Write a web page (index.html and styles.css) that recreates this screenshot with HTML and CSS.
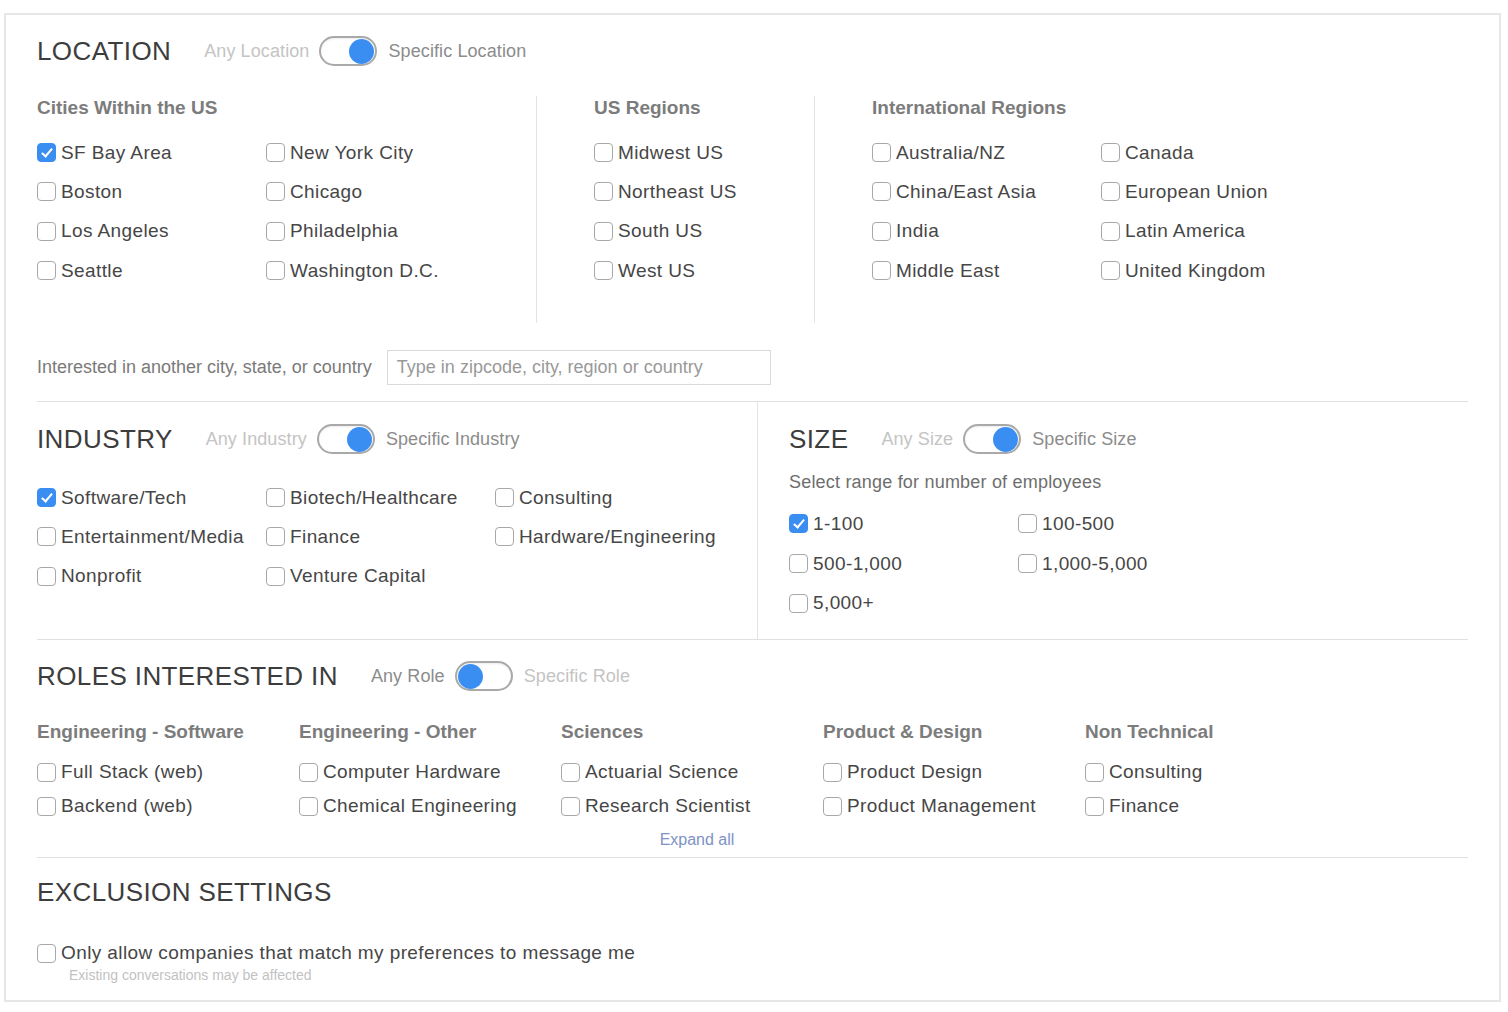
FILE: index.html
```html
<!DOCTYPE html>
<html>
<head>
<meta charset="utf-8">
<link rel="stylesheet" href="styles.css">
</head>
<body>
<div class="panel">
  <section class="location">
    <div class="head">
      <h2 class="title">LOCATION</h2>
      <span class="opt off">Any Location</span>
      <span class="toggle on"><span class="knob"></span></span>
      <span class="opt">Specific Location</span>
    </div>
    <div class="loc-cols">
      <div class="col cities">
        <h3 class="colhead">Cities Within the US</h3>
        <div class="grid2">
          <label class="item"><span class="cb checked"></span>SF Bay Area</label>
          <label class="item"><span class="cb"></span>New York City</label>
          <label class="item"><span class="cb"></span>Boston</label>
          <label class="item"><span class="cb"></span>Chicago</label>
          <label class="item"><span class="cb"></span>Los Angeles</label>
          <label class="item"><span class="cb"></span>Philadelphia</label>
          <label class="item"><span class="cb"></span>Seattle</label>
          <label class="item"><span class="cb"></span>Washington D.C.</label>
        </div>
      </div>
      <div class="col regions">
        <h3 class="colhead">US Regions</h3>
        <div class="grid1">
          <label class="item"><span class="cb"></span>Midwest US</label>
          <label class="item"><span class="cb"></span>Northeast US</label>
          <label class="item"><span class="cb"></span>South US</label>
          <label class="item"><span class="cb"></span>West US</label>
        </div>
      </div>
      <div class="col intl">
        <h3 class="colhead">International Regions</h3>
        <div class="grid2">
          <label class="item"><span class="cb"></span>Australia/NZ</label>
          <label class="item"><span class="cb"></span>Canada</label>
          <label class="item"><span class="cb"></span>China/East Asia</label>
          <label class="item"><span class="cb"></span>European Union</label>
          <label class="item"><span class="cb"></span>India</label>
          <label class="item"><span class="cb"></span>Latin America</label>
          <label class="item"><span class="cb"></span>Middle East</label>
          <label class="item"><span class="cb"></span>United Kingdom</label>
        </div>
      </div>
    </div>
    <div class="other">
      <span class="other-label">Interested in another city, state, or country</span>
      <span class="input">Type in zipcode, city, region or country</span>
    </div>
  </section>

  <section class="split">
    <div class="industry">
      <div class="head">
        <h2 class="title">INDUSTRY</h2>
        <span class="opt off">Any Industry</span>
        <span class="toggle on"><span class="knob"></span></span>
        <span class="opt">Specific Industry</span>
      </div>
      <div class="grid3">
        <label class="item"><span class="cb checked"></span>Software/Tech</label>
        <label class="item"><span class="cb"></span>Biotech/Healthcare</label>
        <label class="item"><span class="cb"></span>Consulting</label>
        <label class="item"><span class="cb"></span>Entertainment/Media</label>
        <label class="item"><span class="cb"></span>Finance</label>
        <label class="item"><span class="cb"></span>Hardware/Engineering</label>
        <label class="item"><span class="cb"></span>Nonprofit</label>
        <label class="item"><span class="cb"></span>Venture Capital</label>
      </div>
    </div>
    <div class="size">
      <div class="head">
        <h2 class="title">SIZE</h2>
        <span class="opt off">Any Size</span>
        <span class="toggle on"><span class="knob"></span></span>
        <span class="opt">Specific Size</span>
      </div>
      <p class="hint">Select range for number of employees</p>
      <div class="grid2">
        <label class="item"><span class="cb checked"></span>1-100</label>
        <label class="item"><span class="cb"></span>100-500</label>
        <label class="item"><span class="cb"></span>500-1,000</label>
        <label class="item"><span class="cb"></span>1,000-5,000</label>
        <label class="item"><span class="cb"></span>5,000+</label>
      </div>
    </div>
  </section>

  <section class="roles">
    <div class="head">
      <h2 class="title">ROLES INTERESTED IN</h2>
      <span class="opt">Any Role</span>
      <span class="toggle"><span class="knob"></span></span>
      <span class="opt off">Specific Role</span>
    </div>
    <div class="grid5">
      <div class="rcol">
        <h3 class="colhead">Engineering - Software</h3>
        <label class="item"><span class="cb"></span>Full Stack (web)</label>
        <label class="item"><span class="cb"></span>Backend (web)</label>
      </div>
      <div class="rcol">
        <h3 class="colhead">Engineering - Other</h3>
        <label class="item"><span class="cb"></span>Computer Hardware</label>
        <label class="item"><span class="cb"></span>Chemical Engineering</label>
      </div>
      <div class="rcol">
        <h3 class="colhead">Sciences</h3>
        <label class="item"><span class="cb"></span>Actuarial Science</label>
        <label class="item"><span class="cb"></span>Research Scientist</label>
      </div>
      <div class="rcol">
        <h3 class="colhead">Product &amp; Design</h3>
        <label class="item"><span class="cb"></span>Product Design</label>
        <label class="item"><span class="cb"></span>Product Management</label>
      </div>
      <div class="rcol">
        <h3 class="colhead">Non Technical</h3>
        <label class="item"><span class="cb"></span>Consulting</label>
        <label class="item"><span class="cb"></span>Finance</label>
      </div>
    </div>
    <div class="expand"><a class="expand-link">Expand all</a></div>
  </section>

  <section class="exclusion">
    <h2 class="title">EXCLUSION SETTINGS</h2>
    <label class="item excl"><span class="cb"></span>Only allow companies that match my preferences to message me</label>
    <p class="note">Existing conversations may be affected</p>
  </section>
</div>
</body>
</html>
```

FILE: styles.css
```css
* { box-sizing: border-box; }
html, body { margin: 0; padding: 0; background: #fff; }
body {
  font-family: "Liberation Sans", Arial, sans-serif;
  color: #454545;
  padding: 13px 0 0 4px;
}
.panel {
  width: 1497px;
  height: 989px;
  border: 2px solid #e6e6e6;
  padding: 0 31px 0 31px;
}
h2, h3, p { margin: 0; font-weight: normal; }

.head {
  display: flex;
  align-items: center;
  height: 30px;
}
.title {
  font-size: 26px;
  color: #3d3d3d;
  line-height: 30px;
  margin-right: 33px;
  letter-spacing: 0.4px;
}
.opt {
  font-size: 18px;
  color: #8c8c8c;
  letter-spacing: 0.1px;
}
.opt.off { color: #c4c4c4; }
.toggle {
  width: 58px;
  height: 30px;
  border: 2px solid #a9a9a9;
  border-radius: 15px;
  margin: 0 11px 0 10px;
  display: flex;
  align-items: center;
  padding: 0 1px;
  box-shadow: inset 0 1px 2px rgba(0,0,0,0.08);
}
.toggle.on { justify-content: flex-end; }
.knob {
  width: 25px;
  height: 25px;
  border-radius: 50%;
  background: #3a8ef2;
}

.colhead {
  font-size: 19px;
  font-weight: bold;
  color: #7c7c7c;
  line-height: 24px;
}

.item {
  display: flex;
  align-items: center;
  font-size: 19px;
  color: #464646;
  height: 39.3px;
  white-space: nowrap;
  letter-spacing: 0.4px;
}
.cb {
  width: 19px;
  height: 19px;
  border: 1px solid #a8a8a8;
  border-radius: 4px;
  margin-right: 5px;
  flex: none;
  position: relative;
  background: #fff;
}
.cb.checked {
  background: #3a8ef2;
  border-color: #3a8ef2;
}
.cb.checked::after {
  content: "";
  position: absolute;
  left: 5.5px;
  top: 2px;
  width: 4px;
  height: 9px;
  border: solid #fff;
  border-width: 0 2px 2px 0;
  transform: rotate(40deg);
}

/* location */
.location { padding-top: 21px; }
.loc-cols {
  display: flex;
  margin-top: 30px;
  height: 227px;
}
.col .colhead { margin-bottom: 13px; }
.cities { width: 500px; border-right: 1px solid #e3e3e3; }
.regions { width: 278px; padding-left: 57px; border-right: 1px solid #e3e3e3; }
.intl { padding-left: 57px; }
.grid2 { display: grid; grid-template-columns: 229px 229px; }
.grid1 { display: grid; grid-template-columns: 229px; }
.grid3 { display: grid; grid-template-columns: 229px 229px 229px; }

.other {
  display: flex;
  align-items: center;
  margin-top: 27px;
  padding-bottom: 16px;
  border-bottom: 1px solid #e0e0e0;
}
.other-label { font-size: 18px; color: #7a7a7a; margin-right: 15px; }
.input {
  width: 384px;
  height: 35px;
  border: 1px solid #dadada;
  padding: 0 9px;
  display: flex;
  align-items: center;
  font-size: 18px;
  color: #999;
}

/* industry / size */
.split {
  display: flex;
  height: 238px;
  border-bottom: 1px solid #e0e0e0;
}
.industry {
  width: 721px;
  border-right: 1px solid #e3e3e3;
  padding-top: 22px;
}
.industry .grid3 { margin-top: 24px; }
.size { padding-left: 31px; padding-top: 22px; }
.hint {
  font-size: 18px;
  color: #6e6e6e;
  line-height: 24px;
  margin-top: 16px;
  letter-spacing: 0.2px;
}
.size .grid2 { margin-top: 10px; }
.size .item { height: 39.8px; }

/* roles */
.roles {
  padding-top: 21px;
  border-bottom: 1px solid #e0e0e0;
  height: 218px;
}
.grid5 {
  display: grid;
  grid-template-columns: repeat(5, 262px);
  margin-top: 29px;
}
.rcol .colhead { margin-bottom: 11px; }
.rcol .item { height: 34px; }
.expand {
  width: 1320px;
  text-align: center;
  line-height: 20px;
  margin-top: 7px;
}
.expand-link { font-size: 16px; color: #7e92c6; }

/* exclusion */
.exclusion { padding-top: 19px; }
.exclusion .title { line-height: 30px; }
.excl { height: 24px; margin-top: 34px; }
.note {
  font-size: 14px;
  color: #c2c2c2;
  line-height: 18px;
  margin-top: 1px;
  padding-left: 32px;
}
```
